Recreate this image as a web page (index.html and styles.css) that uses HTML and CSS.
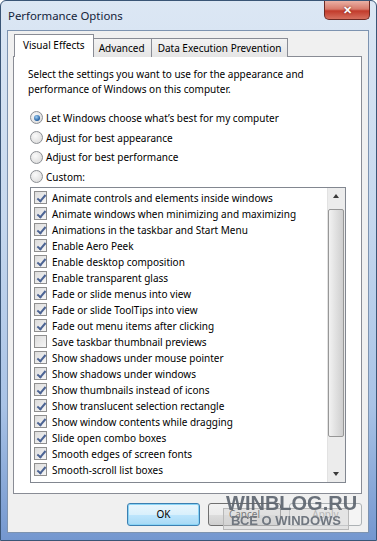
FILE: index.html
```html
<!DOCTYPE html>
<html lang="en">
<head>
  <meta charset="UTF-8" />
  <title>Performance Options</title>
  <link rel="stylesheet" href="styles.css">
</head>
<body>

  <div class="window">
    <div class="titlebar">
      <span class="title">Performance Options</span>
      <button class="close">&#x2715;</button>
    </div>

    <div class="client">
      <div class="tabs">
        <div class="tab active">Visual Effects</div>
        <div class="tab">Advanced</div>
        <div class="tab">Data Execution Prevention</div>
      </div>

      <div class="panel">
        <p class="intro">Select the settings you want to use for the appearance and<br>performance of Windows on this computer.</p>

        <div class="radios">
          <label class="radio-row"><span class="radio on"></span>Let Windows choose what’s best for my computer</label>
          <label class="radio-row"><span class="radio"></span>Adjust for best appearance</label>
          <label class="radio-row"><span class="radio"></span>Adjust for best performance</label>
          <label class="radio-row"><span class="radio"></span>Custom:</label>
        </div>

        <div class="listbox">
          <div class="items">
            <div class="item"><span class="check on"></span>Animate controls and elements inside windows</div>
            <div class="item"><span class="check on"></span>Animate windows when minimizing and maximizing</div>
            <div class="item"><span class="check on"></span>Animations in the taskbar and Start Menu</div>
            <div class="item"><span class="check on"></span>Enable Aero Peek</div>
            <div class="item"><span class="check on"></span>Enable desktop composition</div>
            <div class="item"><span class="check on"></span>Enable transparent glass</div>
            <div class="item"><span class="check on"></span>Fade or slide menus into view</div>
            <div class="item"><span class="check on"></span>Fade or slide ToolTips into view</div>
            <div class="item"><span class="check on"></span>Fade out menu items after clicking</div>
            <div class="item"><span class="check"></span>Save taskbar thumbnail previews</div>
            <div class="item"><span class="check on"></span>Show shadows under mouse pointer</div>
            <div class="item"><span class="check on"></span>Show shadows under windows</div>
            <div class="item"><span class="check on"></span>Show thumbnails instead of icons</div>
            <div class="item"><span class="check on"></span>Show translucent selection rectangle</div>
            <div class="item"><span class="check on"></span>Show window contents while dragging</div>
            <div class="item"><span class="check on"></span>Slide open combo boxes</div>
            <div class="item"><span class="check on"></span>Smooth edges of screen fonts</div>
            <div class="item"><span class="check on"></span>Smooth-scroll list boxes</div>
          </div>
          <div class="scrollbar">
            <div class="arrow up"></div>
            <div class="track">
              <div class="thumb"></div>
            </div>
            <div class="arrow down"></div>
          </div>
        </div>
      </div>

      <div class="buttons">
        <button class="btn default">OK</button>
        <button class="btn">Cancel</button>
        <button class="btn" disabled>Apply</button>
      </div>
    </div>

    <div class="watermark">
      <div class="wm-big">WINBLOG.RU</div>
      <div class="wm-small">ВСЕ О WINDOWS</div>
    </div>
  </div>

</body>
</html>
```

FILE: styles.css
```css
body {
  margin: 0;
  font-family: "Noto Sans", sans-serif;
  font-size: 10px;
  color: #000;
}

.window {
  position: relative;
  height: 100vh;
  box-sizing: border-box;
  border: 1px solid #3a5576;
  border-radius: 6px 6px 0 0;
  background: linear-gradient(#dce7f4, #c6d8ee 40%, #a9c3e6 75%, #7497cf);
  display: flex;
  flex-direction: column;
  padding: 0 7px 7px 6px;
}

.titlebar {
  height: 29px;
  display: flex;
  align-items: flex-start;
}

.title {
  font-size: 11.4px;
  color: #14233a;
  margin: 7px 0 0 1px;
}

.close {
  margin-left: auto;
  margin-right: -1px;
  width: 46px;
  height: 19px;
  border: 1px solid #6d2a24;
  border-top: none;
  border-radius: 0 0 5px 5px;
  background: linear-gradient(#eab0a4, #d77a6b 45%, #c23b2b 55%, #d6705f);
  color: #fff;
  font-size: 11px;
  font-weight: bold;
  line-height: 17px;
  padding: 0;
  text-shadow: 0 0 2px #6d1d14;
}

.client {
  flex: 1;
  background: #f0f0f0;
  border: 1px solid #7d93b0;
  padding: 3px 6px 0 5px;
  display: flex;
  flex-direction: column;
}

.tabs {
  display: flex;
  align-items: flex-end;
  padding-left: 3px;
  position: relative;
  z-index: 1;
  margin-bottom: -1px;
}

.tab {
  height: 18px;
  line-height: 18px;
  padding: 0 6px;
  border: 1px solid #898c95;
  border-bottom: none;
  margin-left: -1px;
  background: linear-gradient(#f3f3f3, #e5e5e5);
  color: #000;
}

.tab.active {
  height: 22px;
  line-height: 21px;
  margin: 0 -2px 0 -2px;
  padding: 0 8px;
  background: #fff;
  position: relative;
  z-index: 2;
}

.tab.active + .tab {
  margin-left: 0;
}

.panel {
  background: #fff;
  border: 1px solid #898c95;
  padding: 10px 15px 10px 14px;
}

.intro {
  margin: 0;
  line-height: 15px;
}

.radios {
  margin-top: 11px;
  display: flex;
  flex-direction: column;
}

.radio-row {
  height: 19.7px;
  display: flex;
  align-items: center;
  padding-left: 2px;
}

.radio {
  width: 11px;
  height: 11px;
  border: 1px solid #8c8f94;
  border-radius: 50%;
  background: radial-gradient(circle at 40% 35%, #fafafa, #d6d6d6);
  margin-right: 3px;
  position: relative;
}

.radio.on::after {
  content: "";
  position: absolute;
  left: 2.5px;
  top: 2.5px;
  width: 6px;
  height: 6px;
  border-radius: 50%;
  background: radial-gradient(circle at 40% 35%, #9fd0f5, #1f5b9e 70%);
}

.listbox {
  margin: 0 0 0 2px;
  height: 296px;
  box-sizing: border-box;
  border: 1px solid #828790;
  display: flex;
}

.items {
  flex: 1;
  padding-top: 2px;
  overflow: hidden;
}

.item {
  height: 16px;
  display: flex;
  align-items: center;
  padding-left: 3px;
  white-space: nowrap;
}

.check {
  width: 11px;
  height: 11px;
  border: 1px solid #8f8f8f;
  background: linear-gradient(135deg, #dcdcdc, #f6f6f6);
  margin-right: 5px;
  position: relative;
  flex-shrink: 0;
}

.check.on::after {
  content: "";
  position: absolute;
  left: 3.5px;
  top: 0.5px;
  width: 3px;
  height: 7px;
  border: solid #4c6494;
  border-width: 0 2px 2px 0;
  transform: rotate(40deg);
}

.scrollbar {
  width: 17px;
  display: flex;
  flex-direction: column;
  background: #ececec;
  border-left: 1px solid #e2e2e2;
}

.arrow {
  height: 17px;
  position: relative;
}

.arrow::after {
  content: "";
  position: absolute;
  left: 5px;
  border-left: 3.5px solid transparent;
  border-right: 3.5px solid transparent;
}

.arrow.up::after {
  top: 6px;
  border-bottom: 4px solid #3a3a3a;
}

.arrow.down::after {
  top: 7px;
  border-top: 4px solid #3a3a3a;
}

.track {
  flex: 1;
  padding: 4px 0 0 0;
}

.thumb {
  height: 226px;
  margin: 0 1px 0 0;
  border: 1px solid #979797;
  border-radius: 2px;
  background: linear-gradient(90deg, #f2f2f2, #e0e0e0 50%, #cfcfcf);
}

.buttons {
  display: flex;
  justify-content: flex-end;
  gap: 8px;
  margin-top: 9px;
}

.btn {
  width: 73px;
  height: 23px;
  font-family: "Noto Sans", sans-serif;
  font-size: 10px;
  border: 1px solid #707070;
  border-radius: 3px;
  background: linear-gradient(#f2f2f2, #ebebeb 50%, #dddddd 51%, #cfcfcf);
  color: #000;
  padding: 0;
}

.btn.default {
  border-color: #3c7fb1;
  background: linear-gradient(#eaf6fd, #d9f0fc 50%, #bee6fd 51%, #a7d9f5);
  box-shadow: inset 0 0 0 1px #8ad4f6;
}

.btn:disabled {
  color: #8d8d8d;
  border-color: #adb2b5;
  background: #f4f4f4;
}

.watermark {
  position: absolute;
  right: 15px;
  bottom: 10px;
  width: 138px;
  display: flex;
  flex-direction: column;
  align-items: flex-start;
  font-family: "Liberation Sans", Arial, sans-serif;
  font-weight: bold;
  color: #5e6670;
}

.wm-big {
  font-size: 20px;
  line-height: 20px;
  margin-left: 3px;
  filter: blur(0.5px);
  position: relative;
  z-index: 1;
  opacity: 0.92;
}

.wm-small {
  margin-top: -5px;
  width: 126px;
  height: 22px;
  box-sizing: border-box;
  padding-top: 5px;
  text-align: center;
  font-size: 13px;
  line-height: 14px;
  color: #707780;
  background: rgba(215, 215, 215, 0.55);
  border: 1px solid #b8b8b8;
  filter: blur(0.4px);
}
```
